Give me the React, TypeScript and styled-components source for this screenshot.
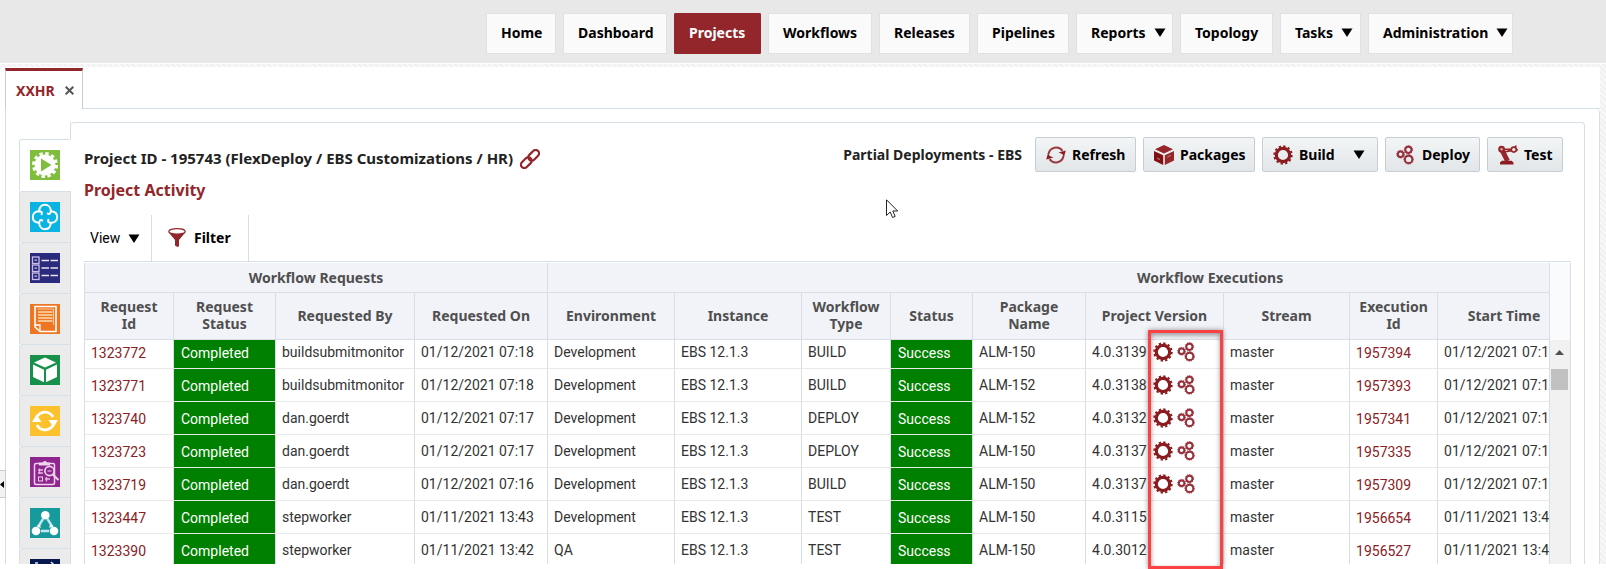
import React from 'react';
import styled, { createGlobalStyle, css } from 'styled-components';

const crimson = '#93262a';
const line = '#d6dfe6';
const headFont = '"Noto Sans", sans-serif';
const hatch =
  'repeating-linear-gradient(45deg, #f8f8f8 0, #f8f8f8 2px, #f1f1f1 2px, #f1f1f1 4px)';

const GlobalStyle = createGlobalStyle`
  * { box-sizing: border-box; }
  body {
    margin: 0;
    background: #fff;
    color: #333;
    font-family: Roboto, sans-serif;
    font-size: 14px;
    line-height: 17px;
  }
  button, a { font: inherit; color: inherit; }
  button { margin: 0; padding: 0; border: 0; background: none; }
  a { text-decoration: none; }
  svg { display: block; flex: none; }
`;

const strong = css`
  font-family: ${headFont};
  font-weight: 700;
`;

const Page = styled.div`
  position: relative;
  display: flex;
  flex-direction: column;
  height: 100vh;
  overflow: hidden;
  padding-bottom: 5px;
`;

const TopBar = styled.header`
  flex: none;
  background: #e8e8e8;
  padding: 13px 93px 9px 0;
`;

const Nav = styled.nav`
  display: flex;
  justify-content: flex-end;
  gap: 7px;
`;

const NavLink = styled.a<{ $w: number; $active?: boolean }>`
  display: flex;
  align-items: center;
  gap: 8px;
  width: ${(p) => p.$w}px;
  height: 41px;
  padding: 0 0 2px 14px;
  border: 1px solid #dfe2e4;
  background: #fafafa;
  color: #000;
  ${strong}
  ${(p) =>
    p.$active &&
    css`
      background: ${crimson};
      border-color: ${crimson};
      border-radius: 1px;
      color: #fff;
    `}
`;

const Body = styled.div`
  position: relative;
  flex: 1;
  min-height: 0;
  display: flex;
  border-top: 1px solid #fff;
  background: ${hatch};
  padding: 3px 6px 0 0;
`;

const Workspace = styled.div`
  flex: 1;
  min-width: 0;
  display: flex;
  flex-direction: column;
  background: #fff;
  padding-left: 5px;
`;

const TabStrip = styled.div`
  display: flex;
  flex: none;
  align-items: stretch;
  height: 42px;
  padding-top: 1px;
`;

const ProjectTab = styled.div`
  display: flex;
  align-items: center;
  gap: 10px;
  width: 78px;
  padding-left: 10px;
  border: 1px solid #c4ced7;
  border-top: 3px solid ${crimson};
  border-bottom: 0;
  color: ${crimson};
  ${strong}
`;

const StripRest = styled.div`
  flex: 1;
  border-bottom: 1px solid ${line};
`;

const Outer = styled.div`
  flex: 1;
  min-height: 0;
  display: flex;
  border: 1px solid ${line};
  border-width: 0 1px;
  border-top-right-radius: 4px;
  padding: 13px 14px 0 13px;
`;

const Rail = styled.div`
  flex: none;
  width: 52px;
  padding-top: 17px;
  overflow: hidden;
`;

const RailTab = styled.button<{ $active?: boolean }>`
  display: flex;
  align-items: center;
  width: 100%;
  height: 51px;
  padding-left: 10px;
  border: 1px solid ${line};
  border-bottom: 0;
  border-radius: 3px 0 0 0;
  background: #ebebeb;
  ${(p) =>
    p.$active &&
    css`
      background: #fff;
      border-right-color: #fff;
      height: 52px;
      padding-bottom: 2px;
    `}
`;

const Panel = styled.main`
  flex: 1;
  min-width: 0;
  display: flex;
  flex-direction: column;
  border-top: 1px solid ${line};
  border-right: 1px solid ${line};
  border-radius: 4px 4px 0 0;
  padding: 14px 13px 0 13px;
`;

const PanelEdge = styled.div`
  flex: none;
  width: 1px;
  height: 17px;
  margin-left: -1px;
  background: ${line};
`;

const Heading = styled.div`
  display: flex;
  justify-content: space-between;
  padding-right: 8px;
`;

const Title = styled.h1`
  display: flex;
  align-items: center;
  gap: 7px;
  height: 43px;
  margin: 0;
  color: #222;
  font-size: 15px;
  ${strong}
`;

const Subtitle = styled.h2`
  margin: 0;
  color: ${crimson};
  font-size: 16px;
  line-height: 20px;
  ${strong}
`;

const Actions = styled.div`
  display: flex;
  align-items: flex-start;
  gap: 7px;
`;

const PartialLabel = styled.span`
  align-self: flex-start;
  padding: 9px 6px 0 0;
  color: #222;
  ${strong}
`;

const ActionButton = styled.button<{ $w: number }>`
  display: flex;
  align-items: center;
  gap: 6px;
  width: ${(p) => p.$w}px;
  height: 35px;
  padding-left: 10px;
  border: 1px solid #c4ced7;
  border-radius: 2px;
  background: linear-gradient(#f3f5f6, #e2e6e9);
  color: #000;
  ${strong}
`;

const MenuArrow = styled.span`
  margin-left: auto;
  padding-right: 12px;
`;

const Toolbar = styled.div`
  display: flex;
  flex: none;
  height: 47px;
  margin-top: 15px;
  border-bottom: 1px solid ${line};
`;

const ToolButton = styled.button<{ $w: number; $bold?: boolean }>`
  display: flex;
  align-items: center;
  gap: 8px;
  width: ${(p) => p.$w}px;
  padding: 0 0 ${(p) => (p.$bold ? '2px 16px' : '0 6px')};
  border-right: 1px solid ${line};
  color: #000;
  ${(p) => p.$bold && strong}
`;

const GridArea = styled.div`
  flex: 1;
  min-height: 0;
  display: flex;
  margin-top: 1px;
  border-left: 1px solid ${line};
  border-right: 1px solid ${line};
`;

const GridView = styled.div`
  flex: 1;
  min-width: 0;
  overflow: hidden;
`;

const Grid = styled.table`
  width: 1788px;
  table-layout: fixed;
  border-collapse: separate;
  border-spacing: 0;
`;

const Th = styled.th`
  height: 47px;
  padding: 0 8px 2px;
  border-right: 1px solid ${line};
  border-bottom: 1px solid ${line};
  background: #f2f3f8;
  color: #4f4f4f;
  ${strong}
`;

const GroupTh = styled(Th)`
  height: 30px;
  padding-bottom: 0;
`;

const Td = styled.td<{ $low?: boolean; $status?: boolean }>`
  height: 33px;
  padding: ${(p) => (p.$low ? '2px' : '0')} 0 0 6px;
  border-right: 1px solid ${line};
  border-bottom: 1px solid #e9e9e9;
  white-space: nowrap;
  ${(p) =>
    p.$status &&
    css`
      background: #008000;
      color: #fff;
      padding-left: 7px;
    `}
`;

const Row = styled.tr`
  &:first-child td {
    height: 29px;
    padding-bottom: 4px;
  }
`;

const RecordLink = styled.a`
  color: #8c2024;
`;

const Version = styled.div`
  display: flex;
  align-items: center;
  gap: 4px;
`;

const VersionText = styled.span`
  width: 57px;
`;

const IconButton = styled.button`
  display: block;
`;

const ScrollBar = styled.div`
  flex: none;
  width: 21px;
  display: flex;
  flex-direction: column;
  border-left: 1px solid ${line};
`;

const ScrollHead = styled.div`
  height: 77px;
  background: #fafbfc;
`;

const ScrollTrack = styled.div`
  flex: 1;
  display: flex;
  flex-direction: column;
  align-items: center;
  background: #f1f1f1;
  padding: 9px 2px 0 0;
`;

const Thumb = styled.div`
  width: 17px;
  height: 21px;
  margin-top: 14px;
  background: #c1c1c1;
`;

const Collapse = styled.button`
  position: absolute;
  left: 0;
  bottom: 66px;
  width: 6px;
  height: 28px;
  border: 1px solid #c8cdd2;
  border-left: 0;
  background: #f2f2f2;
`;

const Highlight = styled.div`
  position: absolute;
  left: 1148px;
  top: 330px;
  bottom: 0;
  width: 75px;
  border: 3px solid #fb4141;
  box-shadow: 0 0 5px rgba(0, 0, 0, 0.4), inset 0 2px 5px rgba(0, 0, 0, 0.4);
  pointer-events: none;
`;

const Pointer = styled.div`
  position: absolute;
  left: 886px;
  top: 199px;
`;

const Down = () => (
  <svg width="12" height="9" viewBox="0 0 12 9" aria-hidden="true">
    <path d="M0.5 0.5H11.5L6 9Z" fill="#000" />
  </svg>
);

const GearIcon = () => (
  <svg width="20" height="20" viewBox="0 0 20 20" fill="none" aria-hidden="true">
    <circle cx="10" cy="10" r="6.7" stroke="#8a1c20" strokeWidth="3.2" />
    <circle cx="10" cy="10" r="8.7" stroke="#8a1c20" strokeWidth="2" strokeDasharray="2.3 2.255" />
  </svg>
);

const Ring = ({ x, y, r }: { x: number; y: number; r: number }) => (
  <>
    <circle cx={x} cy={y} r={r} stroke="#96303a" strokeWidth="2" />
    <circle cx={x} cy={y} r={r + 1.1} stroke="#96303a" strokeWidth="1" strokeDasharray="1.2 1.2" />
  </>
);

const DeployIcon = () => (
  <svg width="20" height="20" viewBox="0 0 20 20" fill="none" aria-hidden="true">
    <Ring x={4.6} y={9.2} r={2.8} />
    <Ring x={12.4} y={4.8} r={3.1} />
    <Ring x={12.6} y={14.4} r={3.7} />
  </svg>
);

const RefreshIcon = () => (
  <svg width="20" height="20" viewBox="0 0 20 20" fill="none" aria-hidden="true">
    <path d="M2.5 9A7.8 7.8 0 0 1 16.5 5.8M17.5 11A7.8 7.8 0 0 1 3.5 14.2" stroke="#9c3b3f" strokeWidth="2" />
    <path d="M12.5 7.5L19.8 5.5L18 12L16.3 9ZM7.5 12.5L0.2 14.5L2 8L3.7 11Z" fill="#8a1c20" />
  </svg>
);

const PackageIcon = () => (
  <svg width="20" height="20" viewBox="0 0 20 20" aria-hidden="true">
    <path d="M10 0L19 4.3L10 8.6L1 4.3Z" fill="#96262a" />
    <path d="M0 6L9.2 10.3V20L0 15.6Z" fill="#7f1115" />
    <path d="M20 6L10.8 10.3V20L20 15.6Z" fill="#96262a" />
    <path d="M3 13.2L6 14.6M13.2 12.2L16.8 10.4" stroke="#c98083" />
  </svg>
);

const RobotIcon = () => (
  <svg width="20" height="20" viewBox="0 0 20 20" fill="none" aria-hidden="true">
    <path d="M2 19.5V17.5L4 15.8H13.5L15.5 17.5V19.5Z" fill="#8a1c20" />
    <path d="M4 5L9.5 16" stroke="#96262a" strokeWidth="5" />
    <circle cx="3.6" cy="4.2" r="3.4" fill="#96262a" />
    <circle cx="3.6" cy="4.2" r="1.2" fill="#d9a5a7" />
    <path d="M6 4.2L13.5 4.4M6 7L13.5 5.6" stroke="#96262a" strokeWidth="1.6" />
    <circle cx="15.8" cy="4.6" r="2.5" stroke="#96262a" strokeWidth="1.6" />
    <path d="M16.5 2.2L18.5 0.6M17.8 6L20 4.4" stroke="#96262a" strokeWidth="1.4" />
  </svg>
);

const FilterIcon = () => (
  <svg width="18" height="19" viewBox="0 0 18 19" aria-hidden="true">
    <path d="M0.3 4L7 12V17.6L9.6 19L11 18.2V12L17.7 4C15 6.6 3 6.6 0.3 4Z" fill="#93262a" />
    <ellipse cx="9" cy="3.4" rx="8.2" ry="2.8" fill="#fff" stroke="#93262a" strokeWidth="1.2" />
  </svg>
);

const ChainIcon = () => (
  <svg width="20" height="20" viewBox="0 0 20 20" fill="none" aria-hidden="true">
    <g transform="rotate(-45 10 10)" stroke="#93262a" strokeWidth="2.2">
      <rect x="-1.4" y="6.6" width="12.4" height="6.8" rx="3.4" />
      <rect x="9" y="6.6" width="12.4" height="6.8" rx="3.4" />
    </g>
  </svg>
);

const CloseIcon = () => (
  <svg width="9" height="9" viewBox="0 0 9 9" stroke="#555" strokeWidth="2" aria-hidden="true">
    <path d="M0.7 0.7L8.3 8.3M8.3 0.7L0.7 8.3" />
  </svg>
);

const tile = (bg: string, art: React.ReactNode) => (
  <svg width="30" height="30" viewBox="0 0 30 30" fill="none" aria-hidden="true">
    <rect width="30" height="30" fill={bg} />
    {art}
  </svg>
);

const Lobe = ({ turn }: { turn: number }) => (
  <path
    transform={`rotate(${turn} 15 15)`}
    d="M9.2 8.6C9.6 5 12 2.8 15 2.8S20.6 5 20.8 8.8C20.8 11.2 19.6 12.6 17.8 11.6"
    stroke="#fff"
    strokeWidth="2"
    strokeLinecap="round"
  />
);

const railItems: { name: string; icon: React.ReactNode }[] = [
  {
    name: 'Activity',
    icon: tile(
      '#80bd3c',
      <>
        <circle cx="15" cy="15" r="10.5" fill="#fff" />
        <circle cx="15" cy="15" r="11.6" stroke="#fff" strokeWidth="2.8" strokeDasharray="3.4 2.674" />
        <path d="M11 8.5L21.5 15L11 21.5Z" fill="#80bd3c" />
      </>,
    ),
  },
  {
    name: 'Workflow',
    icon: tile(
      '#09b4e2',
      <>
        <Lobe turn={0} />
        <Lobe turn={90} />
        <Lobe turn={180} />
        <Lobe turn={270} />
      </>,
    ),
  },
  {
    name: 'Properties',
    icon: tile(
      '#2b2a7c',
      <>
        <g stroke="#c9bfe6" strokeWidth="1.3">
          <rect x="2.5" y="4" width="6.5" height="6.5" />
          <rect x="2.5" y="12" width="6.5" height="6.5" />
          <rect x="2.5" y="20" width="6.5" height="6.5" />
          <path d="M4.5 7.2H7M4.5 15.2H7M4.5 23.2H7" />
        </g>
        <path d="M11.5 7.5H19M20.5 7.5H28M11.5 15H19M20.5 15H28M11.5 22.5H19M20.5 22.5H28" stroke="#e6e4f4" strokeWidth="1.6" />
      </>,
    ),
  },
  {
    name: 'Scripts',
    icon: tile(
      '#ee7623',
      <>
        <path d="M5 2.5H26V27.5H10L5 23Z" stroke="#fff" strokeWidth="1.6" />
        <path d="M7.5 5H23.5V21" stroke="#f9c79c" />
        <path d="M5 21H10V27" stroke="#fff" strokeWidth="1.3" />
        <path d="M8 8H22.5M8 11H22.5M8 14H22.5M8 17H22.5" stroke="#fbdcae" strokeWidth="1.6" />
      </>,
    ),
  },
  {
    name: 'Packages',
    icon: tile(
      '#17904c',
      <>
        <path d="M15 2.5L26 7.5L15 12.5L4 7.5Z" fill="#fff" />
        <path d="M3 9.5L14 14.8V27.3L3 22Z" fill="#fff" />
        <path d="M27 9.5L16 14.8V27.3L27 22Z" fill="#fff" />
      </>,
    ),
  },
  {
    name: 'Refresh',
    icon: tile(
      '#fdc12d',
      <>
        <path d="M6 15A9 9 0 0 1 23 11M24 15A9 9 0 0 1 7 19" stroke="#fff" strokeWidth="2.8" />
        <path d="M2 16L6.5 8.5L11.5 16ZM28 14L23.5 21.5L18.5 14Z" fill="#fff" />
      </>,
    ),
  },
  {
    name: 'Tests',
    icon: tile(
      '#8f258e',
      <>
        <rect x="4.5" y="6.5" width="20" height="21" rx="1.5" stroke="#f0d4ee" strokeWidth="1.5" />
        <path d="M9 8.5V5.5H12.5A2.6 2.6 0 0 1 17.3 5.5H20V8.5Z" fill="#f0d4ee" />
        <path d="M8 13H13M8 16H13M9.5 11.5V17M15 22H20M16.5 20V24.5" stroke="#e3b8e0" strokeWidth="1.4" />
        <rect x="8.5" y="20" width="4" height="4" stroke="#f0d4ee" />
        <circle cx="19.5" cy="14" r="4.6" fill="#8f258e" stroke="#f0d4ee" strokeWidth="1.7" />
        <path d="M22.8 17.5L28.5 23" stroke="#f0d4ee" strokeWidth="2" />
        <path d="M17.5 14H21.5" stroke="#f0d4ee" />
      </>,
    ),
  },
  {
    name: 'Topology',
    icon: tile(
      '#179a9b',
      <>
        <path d="M13 11L8 19M17.5 11L22.5 19M11 23H19" stroke="#c5e6f2" strokeWidth="2.4" />
        <circle cx="15.3" cy="7.3" r="4.3" fill="#fff" />
        <circle cx="6" cy="23" r="4.3" fill="#fff" />
        <circle cx="24" cy="23" r="4.3" fill="#fff" />
        <path d="M10 16.5L6.5 18L10.8 20ZM20 16.5L23.5 18L19.2 20Z" fill="#fff" />
      </>,
    ),
  },
  {
    name: 'Schedule',
    icon: tile('#06184e', <path d="M5 4H8M21 3L24 6" stroke="#dfe3ee" strokeWidth="1.6" />),
  },
];

const navItems: { label: string; w: number; active?: boolean; menu?: boolean }[] = [
  { label: 'Home', w: 70 },
  { label: 'Dashboard', w: 104 },
  { label: 'Projects', w: 87, active: true },
  { label: 'Workflows', w: 104 },
  { label: 'Releases', w: 91 },
  { label: 'Pipelines', w: 92 },
  { label: 'Reports', w: 97, menu: true },
  { label: 'Topology', w: 93 },
  { label: 'Tasks', w: 81, menu: true },
  { label: 'Administration', w: 145, menu: true },
];

const columnWidths = [89, 102, 139, 133, 127, 127, 89, 82, 113, 138, 126, 88, 133, 302];

const requestHeads = ['Request Id', 'Request Status', 'Requested By', 'Requested On'];
const executionHeads = [
  'Environment', 'Instance', 'Workflow Type', 'Status', 'Package Name',
  'Project Version', 'Stream', 'Execution Id', 'Start Time',
];

type Activity = {
  id: string; by: string; on: string; env: string; type: string;
  pkg: string; version: string; built: boolean; exec: string;
};

const activities: Activity[] = [
  { id: '1323772', by: 'buildsubmitmonitor', on: '01/12/2021 07:18', env: 'Development', type: 'BUILD', pkg: 'ALM-150', version: '4.0.3139', built: true, exec: '1957394' },
  { id: '1323771', by: 'buildsubmitmonitor', on: '01/12/2021 07:18', env: 'Development', type: 'BUILD', pkg: 'ALM-152', version: '4.0.3138', built: true, exec: '1957393' },
  { id: '1323740', by: 'dan.goerdt', on: '01/12/2021 07:17', env: 'Development', type: 'DEPLOY', pkg: 'ALM-152', version: '4.0.3132', built: true, exec: '1957341' },
  { id: '1323723', by: 'dan.goerdt', on: '01/12/2021 07:17', env: 'Development', type: 'DEPLOY', pkg: 'ALM-150', version: '4.0.3137', built: true, exec: '1957335' },
  { id: '1323719', by: 'dan.goerdt', on: '01/12/2021 07:16', env: 'Development', type: 'BUILD', pkg: 'ALM-150', version: '4.0.3137', built: true, exec: '1957309' },
  { id: '1323447', by: 'stepworker', on: '01/11/2021 13:43', env: 'Development', type: 'TEST', pkg: 'ALM-150', version: '4.0.3115', built: false, exec: '1956654' },
  { id: '1323390', by: 'stepworker', on: '01/11/2021 13:42', env: 'QA', type: 'TEST', pkg: 'ALM-150', version: '4.0.3012', built: false, exec: '1956527' },
];

const ActivityRow = ({ a }: { a: Activity }) => (
  <Row>
    <Td $low><RecordLink href="#">{a.id}</RecordLink></Td>
    <Td $low $status>Completed</Td>
    <Td>{a.by}</Td>
    <Td>{a.on}</Td>
    <Td>{a.env}</Td>
    <Td>EBS 12.1.3</Td>
    <Td>{a.type}</Td>
    <Td $low $status>Success</Td>
    <Td>{a.pkg}</Td>
    <Td>
      <Version>
        <VersionText>{a.version}</VersionText>
        {a.built && (
          <>
            <IconButton aria-label="Build"><GearIcon /></IconButton>
            <IconButton aria-label="Deploy"><DeployIcon /></IconButton>
          </>
        )}
      </Version>
    </Td>
    <Td>master</Td>
    <Td $low><RecordLink href="#">{a.exec}</RecordLink></Td>
    <Td>{a.on}</Td>
    <Td />
  </Row>
);

export default function App() {
  return (
    <Page>
      <GlobalStyle />
      <TopBar>
        <Nav>
          {navItems.map((n) => (
            <NavLink key={n.label} href="#" $w={n.w} $active={n.active}>
              {n.label}
              {n.menu && <Down />}
            </NavLink>
          ))}
        </Nav>
      </TopBar>
      <Body>
        <Workspace>
          <TabStrip>
            <ProjectTab>
              XXHR
              <button aria-label="Close tab"><CloseIcon /></button>
            </ProjectTab>
            <StripRest />
          </TabStrip>
          <Outer>
            <Rail>
              {railItems.map((r, i) => (
                <RailTab key={r.name} $active={i === 0} aria-label={r.name}>
                  {r.icon}
                </RailTab>
              ))}
            </Rail>
            <PanelEdge />
            <Panel>
              <Heading>
                <div>
                  <Title>
                    Project ID - 195743 (FlexDeploy / EBS Customizations / HR)
                    <button aria-label="Copy link"><ChainIcon /></button>
                  </Title>
                  <Subtitle>Project Activity</Subtitle>
                </div>
                <Actions>
                  <PartialLabel>Partial Deployments - EBS</PartialLabel>
                  <ActionButton $w={101}><RefreshIcon />Refresh</ActionButton>
                  <ActionButton $w={112}><PackageIcon />Packages</ActionButton>
                  <ActionButton $w={116}>
                    <GearIcon />Build<MenuArrow><Down /></MenuArrow>
                  </ActionButton>
                  <ActionButton $w={95}><DeployIcon />Deploy</ActionButton>
                  <ActionButton $w={76}><RobotIcon />Test</ActionButton>
                </Actions>
              </Heading>
              <Toolbar>
                <ToolButton $w={68}>View<Down /></ToolButton>
                <ToolButton $w={97} $bold><FilterIcon />Filter</ToolButton>
              </Toolbar>
              <GridArea>
                <GridView>
                  <Grid>
                    <colgroup>
                      {columnWidths.map((w, i) => <col key={i} width={w} />)}
                    </colgroup>
                    <thead>
                      <tr>
                        <GroupTh colSpan={4} scope="colgroup">Workflow Requests</GroupTh>
                        <GroupTh colSpan={10} scope="colgroup">Workflow Executions</GroupTh>
                      </tr>
                      <tr>
                        {[...requestHeads, ...executionHeads].map((h) => (
                          <Th key={h} scope="col">{h}</Th>
                        ))}
                        <Th />
                      </tr>
                    </thead>
                    <tbody>
                      {activities.map((a) => <ActivityRow key={a.id} a={a} />)}
                    </tbody>
                  </Grid>
                </GridView>
                <ScrollBar>
                  <ScrollHead />
                  <ScrollTrack>
                    <svg width="9" height="6" viewBox="0 0 9 6" aria-hidden="true">
                      <path d="M0 6L4.5 1L9 6Z" fill="#505050" />
                    </svg>
                    <Thumb />
                  </ScrollTrack>
                </ScrollBar>
              </GridArea>
            </Panel>
          </Outer>
        </Workspace>
        <Collapse aria-label="Collapse panel">
          <svg width="4" height="7" viewBox="0 0 4 7" aria-hidden="true">
            <path d="M4 0V7L0 3.5Z" fill="#000" />
          </svg>
        </Collapse>
      </Body>
      <Highlight />
      <Pointer>
        <svg width="13" height="20" viewBox="0 0 13 20" aria-hidden="true">
          <path d="M0.5 0.8V16.5L4.2 13L6.6 18.5L9.2 17.4L6.8 12H11.7Z" fill="#fff" stroke="#222" />
        </svg>
      </Pointer>
    </Page>
  );
}
